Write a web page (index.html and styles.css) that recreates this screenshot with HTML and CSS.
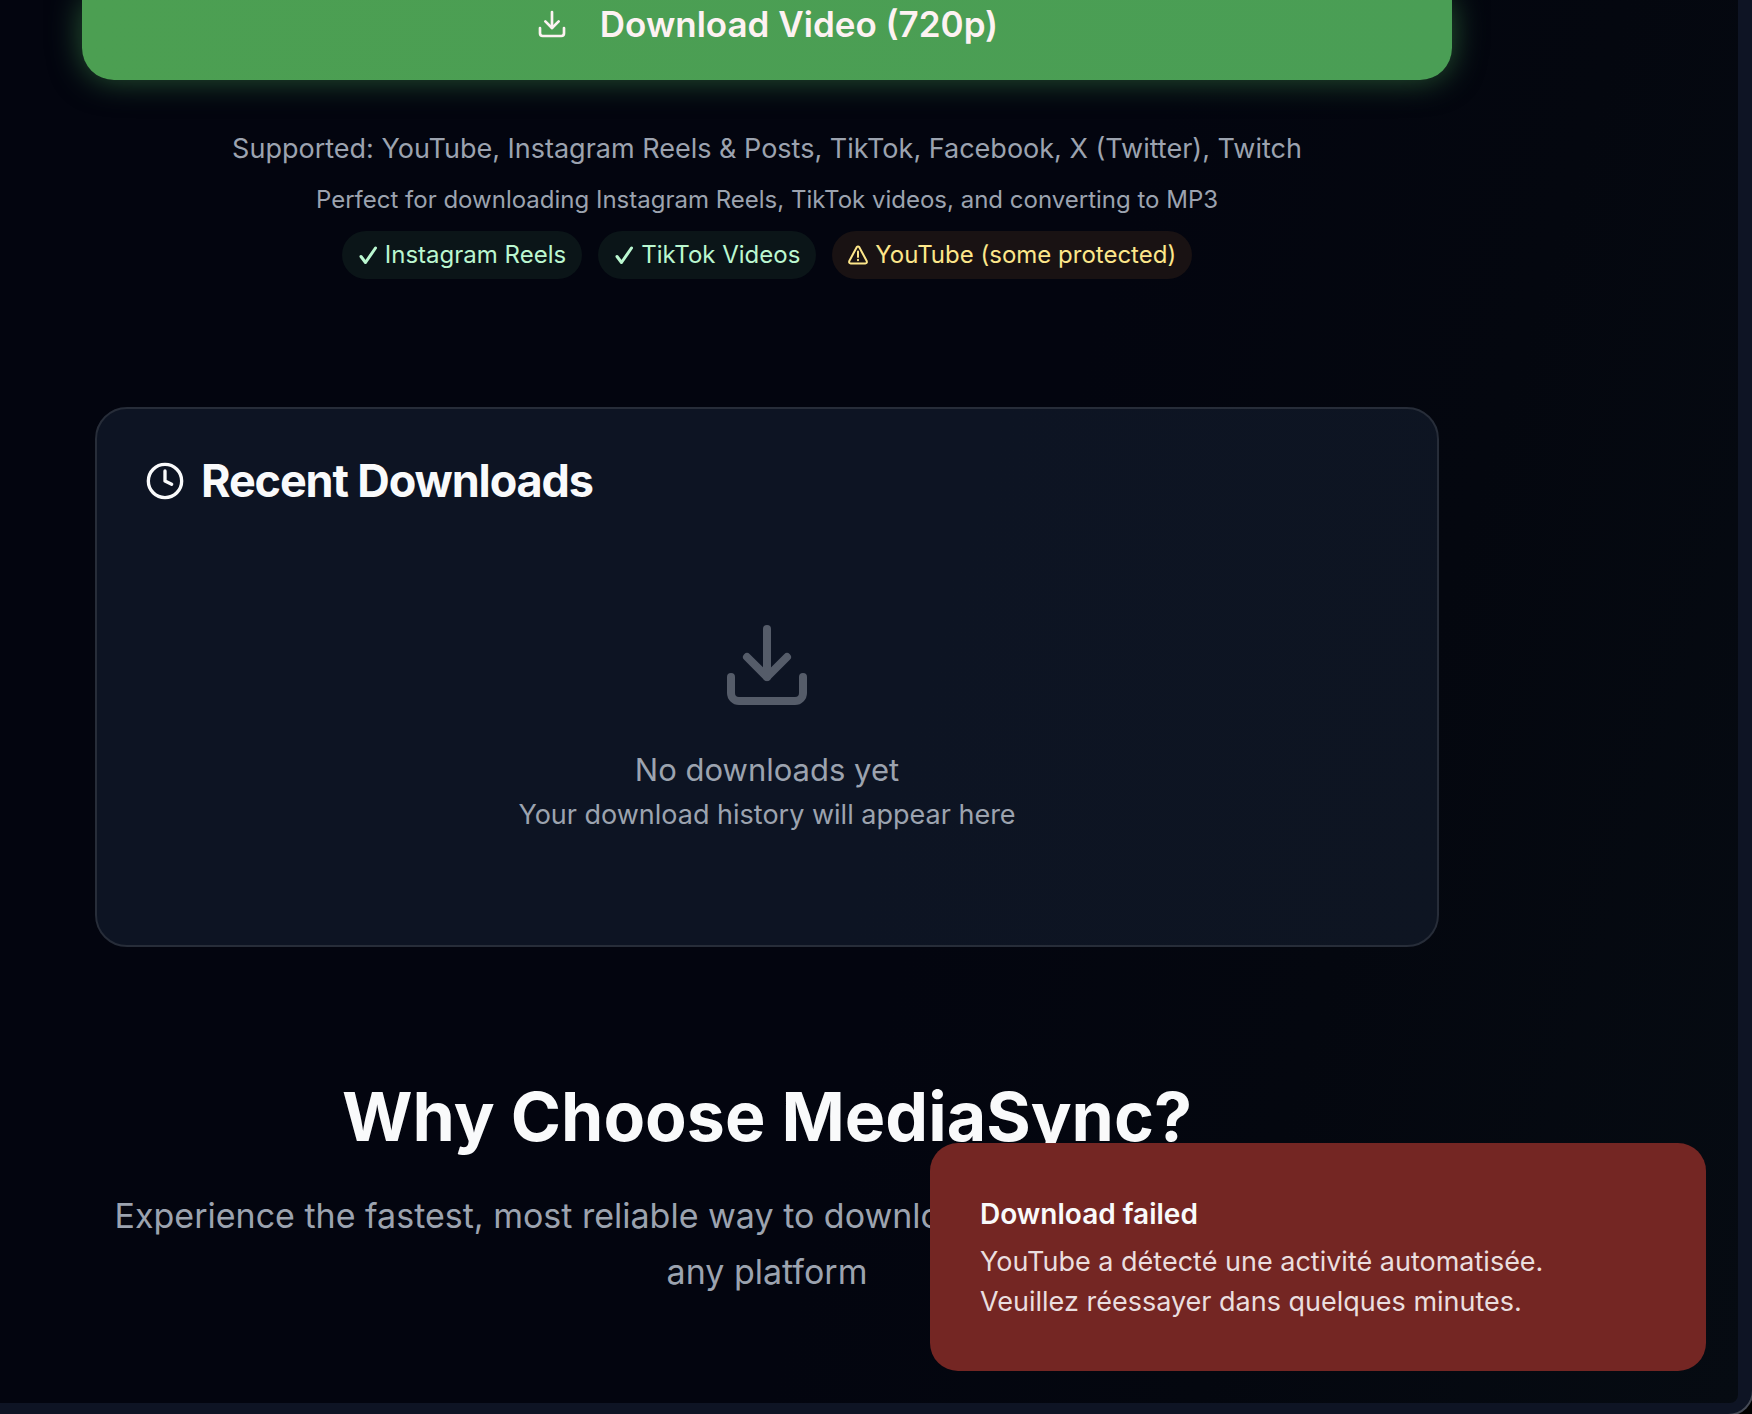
FILE: index.html
```html
<!DOCTYPE html>
<html lang="en">
<head>
<meta charset="utf-8">
<meta name="viewport" content="width=device-width, initial-scale=1">
<title>MediaSync</title>
<link rel="stylesheet" href="styles.css">
</head>
<body>
<div class="window">
  <div class="viewport">
    <main class="page">
      <button class="download" type="button">
        <svg class="icon-md" viewBox="0 0 24 24" aria-hidden="true"><path d="M21 15v4a2 2 0 0 1-2 2H5a2 2 0 0 1-2-2v-4"/><path d="M7 10l5 5 5-5"/><path d="M12 15V3"/></svg>
        <span>Download Video (720p)</span>
      </button>

      <section class="support">
        <p class="supported">Supported: YouTube, Instagram Reels &amp; Posts, TikTok, Facebook, X (Twitter), Twitch</p>
        <p class="perfect">Perfect for downloading Instagram Reels, TikTok videos, and converting to MP3</p>
        <ul class="pills">
          <li class="pill ok"><svg class="mark" viewBox="0 0 20 20" aria-hidden="true"><path d="M3 11.500l4.500 6L17.500 3"/></svg>Instagram Reels</li>
          <li class="pill ok"><svg class="mark" viewBox="0 0 20 20" aria-hidden="true"><path d="M3 11.500l4.500 6L17.500 3"/></svg>TikTok Videos</li>
          <li class="pill warn"><svg class="mark" viewBox="0 0 20 20" aria-hidden="true"><path d="M8.700 2.200L1.300 16Q.6 18.400 2.800 18.600H17.200Q19.400 18.400 18.700 16L11.300 2.200Q10 .6 8.700 2.200Z"/><path d="M10 6.500v5.500M10 14.800v.4"/></svg>YouTube (some protected)</li>
        </ul>
      </section>

      <section class="card">
        <h2 class="card-title">
          <svg class="icon-lg" viewBox="0 0 24 24" aria-hidden="true"><circle cx="12" cy="12" r="10"/><path d="M12 6v6l4 2"/></svg>
          Recent Downloads
        </h2>
        <div class="empty">
          <svg class="icon-xl" viewBox="0 0 24 24" aria-hidden="true"><path d="M21 15v4a2 2 0 0 1-2 2H5a2 2 0 0 1-2-2v-4"/><path d="M7 10l5 5 5-5"/><path d="M12 15V3"/></svg>
          <p class="empty-title">No downloads yet</p>
          <p class="empty-text">Your download history will appear here</p>
        </div>
      </section>

      <section class="why">
        <h2 class="why-title">Why Choose MediaSync?</h2>
        <p class="why-text">Experience the fastest, most reliable way to download and convert all media from any platform</p>
      </section>
    </main>
    <div class="toast" role="alert">
      <p class="toast-title">Download failed</p>
      <p class="toast-text">YouTube a détecté une activité automatisée. Veuillez réessayer dans quelques minutes.</p>
    </div>
  </div>
</div>
</body>
</html>
```
FILE: styles.css
```css
* { box-sizing: border-box; }

body {
  margin: 0;
  background: #000;
  color: #f9fafb;
  font-family: Inter, "Liberation Sans", sans-serif;
}

h2, p, ul { margin: 0; padding: 0; }

svg {
  flex: none;
  fill: none;
  stroke: currentColor;
  stroke-width: 2;
  stroke-linecap: round;
  stroke-linejoin: round;
}

.window {
  display: flex;
  min-height: 100vh;
  padding: 0 14px 11px 0;
  background: #0e1424;
  border-bottom-right-radius: 24px;
  box-shadow: 0 0 0 2px #454a56;
}

.viewport {
  position: relative;
  flex: 1;
  overflow: hidden;
  border-bottom-right-radius: 8px;
  background: linear-gradient(107deg, #03050f 55%, #04070f 75%, #060b12 100%);
}

.page { padding: 0 286px 0 82px; }

.download {
  display: flex;
  align-items: center;
  justify-content: center;
  gap: 32px;
  width: 100%;
  padding: 0 0 32px;
  border: 0;
  border-radius: 0 0 32px 32px;
  background: linear-gradient(90deg, #4c9f52, #4a9e55);
  box-shadow: 0 0 32px rgba(74, 170, 88, 0.5);
  color: #fdf2f2;
  font-family: inherit;
  font-size: 35px;
  font-weight: 600;
  line-height: 48px;
}

.icon-md { width: 32px; height: 32px; }
.icon-lg { width: 40px; height: 40px; }
.icon-xl { width: 96px; height: 96px; opacity: 0.5; }

.support {
  display: flex;
  flex-direction: column;
  align-items: center;
  padding-top: 49px;
  color: #9ca3af;
  text-align: center;
}

.supported { font-size: 27px; line-height: 40px; }
.perfect { margin-top: 15px; font-size: 24px; line-height: 32px; }

.pills {
  display: flex;
  gap: 16px;
  margin-top: 15px;
  list-style: none;
}

.pill {
  display: flex;
  align-items: center;
  gap: 7px;
  padding: 8px 16px;
  border-radius: 24px;
  font-size: 24px;
  line-height: 32px;
}

.ok { background: #0b1518; color: #bbf7d0; }
.warn { background: #191213; color: #fde68a; }
.mark { width: 20px; height: 20px; }
.ok .mark { stroke-width: 3; }

.card {
  margin: 128px 13px 0;
  padding: 48px;
  border: 2px solid #272d39;
  border-radius: 32px;
  background: linear-gradient(107deg, #0d1423 60%, #0e1522);
}

.card-title {
  display: flex;
  align-items: center;
  gap: 16px;
  font-size: 45px;
  font-weight: 700;
  line-height: 48px;
  letter-spacing: -0.025em;
}

.empty {
  display: flex;
  flex-direction: column;
  align-items: center;
  padding: 112px 0 62px;
  color: #9ca3af;
  text-align: center;
}

.empty-title { margin-top: 33px; font-size: 31px; line-height: 48px; }
.empty-text { margin-top: 1px; font-size: 27px; line-height: 40px; }

.why { padding-top: 129px; text-align: center; }
.why-title { font-size: 68px; font-weight: 700; line-height: 80px; }
.why-text {
  max-width: 1344px;
  margin: 32px auto 0;
  color: #9ca3af;
  font-size: 34px;
  line-height: 56px;
}

.toast {
  position: absolute;
  right: 32px;
  bottom: 32px;
  width: 776px;
  padding: 51px 50px 49px;
  border-radius: 28px;
  background: #742623;
}

.toast-title { font-size: 28px; font-weight: 600; line-height: 40px; }
.toast-text { max-width: 600px; margin-top: 8px; color: #eadedf; font-size: 27px; line-height: 40px; }
```
